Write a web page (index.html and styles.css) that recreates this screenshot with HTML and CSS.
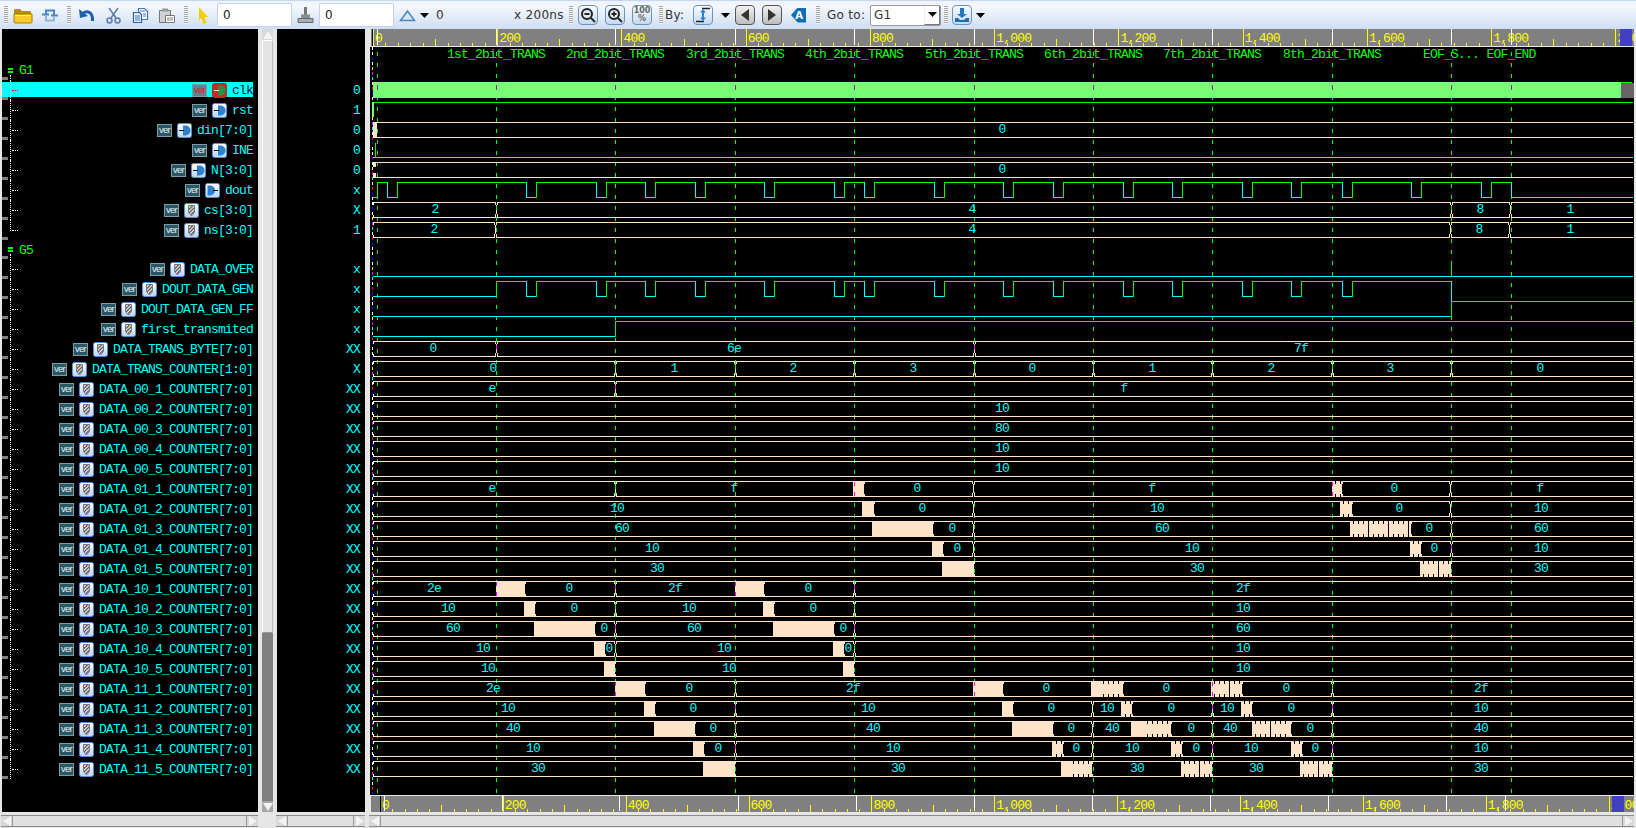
FILE: index.html
```html
<!DOCTYPE html>
<html lang="en">
<head>
<meta charset="utf-8">
<title>Waveform viewer</title>
<link rel="stylesheet" href="styles.css">
</head>
<body>
<svg class="defs" width="0" height="0" aria-hidden="true">
  <defs>
    <linearGradient id="iconbg" x1="0" y1="0" x2="0" y2="1"><stop offset="0" stop-color="#fff"/><stop offset="1" stop-color="#bcd3ee"/></linearGradient>
    <symbol id="port-in" viewBox="0 0 15 15"><rect x=".5" y=".5" width="14" height="14" rx="2" fill="url(#iconbg)" stroke="#4f8fd8"/><path d="M6 2.500h2.500a5 5 0 0 1 0 10H6z" fill="#2f7fcf"/><path d="M2 7.500h5" stroke="#111"/></symbol>
    <symbol id="port-out" viewBox="0 0 15 15"><rect x=".5" y=".5" width="14" height="14" rx="2" fill="url(#iconbg)" stroke="#4f8fd8"/><path d="M2.500 2.500h2.500a5 5 0 0 1 0 10H2.500z" fill="#2f7fcf"/><path d="M8 7.500h5" stroke="#111"/></symbol>
    <symbol id="port-sel" viewBox="0 0 15 15"><rect x=".5" y=".5" width="14" height="14" rx="2" fill="#c8281e" stroke="#a0332a"/><path d="M6 2.500h2.500a5 5 0 0 1 0 10H6z" fill="#2d8f45"/><path d="M2 7.500h5" stroke="#fff"/></symbol>
    <pattern id="hatch" width="2.500" height="2.500" patternUnits="userSpaceOnUse" patternTransform="rotate(45)"><rect width="2.500" height="2.500" fill="#f2f2f2"/><rect width="1.200" height="2.500" fill="#444"/></pattern>
    <symbol id="wire" viewBox="0 0 15 15"><rect x=".5" y=".5" width="14" height="14" rx="2" fill="url(#iconbg)" stroke="#4f8fd8"/><path d="M4.500 2.500h6v7l-3 3.500-3-3.500z" fill="url(#hatch)" stroke="#778"/></symbol>
  </defs>
</svg>

<header class="toolbar">
  <span class="grip"></span>
  <svg class="tool ml5" width="20" height="18" viewBox="0 0 20 18"><path d="M1 4a1 1 0 0 1 1-1h5l2 2h8a1 1 0 0 1 1 1v3H1z" fill="#b98d0c"/><path d="M1 8h18v8a1 1 0 0 1-1 1H2a1 1 0 0 1-1-1z" fill="#f8cb2a" stroke="#a87b00"/><path d="M2 9.500h16" stroke="#ffe98a"/></svg>
  <svg class="tool ml8" width="18" height="14" viewBox="0 0 18 14"><path d="M5 7V2.500h8V7" fill="none" stroke="#4a86c5" stroke-width="2"/><path d="M1 6.500h7M10 7.500h7" stroke="#4a86c5" stroke-width="2"/><path d="M5 8v4.500h8V8" fill="none" stroke="#8fb6de" stroke-width="2"/></svg>
  <span class="grip ml8"></span>
  <svg class="tool ml7" width="17" height="17" viewBox="0 0 17 17"><path d="M5 6.500C9 3 15 5 14.500 14" fill="none" stroke="#1f5fb0" stroke-width="3"/><path d="M1 2l1 9 8-2z" fill="#1f5fb0"/></svg>
  <svg class="tool ml11" width="15" height="17" viewBox="0 0 15 17"><g fill="none" stroke="#5b7ea8" stroke-width="1.500"><path d="M3 1l7 10M12 1L5 11"/><circle cx="3.500" cy="13.500" r="2.500"/><circle cx="11.500" cy="13.500" r="2.500"/></g></svg>
  <svg class="tool ml11" width="17" height="17" viewBox="0 0 17 17"><path d="M6.500 1.500h6l3 3v8h-9z" fill="#fff" stroke="#3f78ba" stroke-width="1.200"/><path d="M1.500 5.500h6l2 2v8h-8z" fill="#eaf2fb" stroke="#2c5f9c" stroke-width="1.200"/><path d="M3 9h5M3 11h5M3 13h5M8 4h5M11 7h3M11 9h3" stroke="#3f78ba"/></svg>
  <svg class="tool ml9" width="18" height="17" viewBox="0 0 18 17"><path d="M1.500 3.500h11v12h-11z" fill="#cfd3d8" stroke="#777"/><path d="M4 1.500h6v3H4z" fill="#999"/><path d="M7.500 8.500h9v7h-9z" fill="#fff" stroke="#777"/><path d="M9 11h6M9 13h6" stroke="#888"/></svg>
  <span class="grip ml8"></span>
  <svg class="tool ml10" width="11" height="17" viewBox="0 0 11 17"><path d="M1 0l9 10H6.500l2 6-3 1-2-6L1 13.500z" fill="#f5d000"/></svg>
  <input class="field ml8" value="0" aria-label="start">
  <svg class="tool ml5" width="17" height="18" viewBox="0 0 17 18"><path d="M7 1h3v8H7z" fill="#777"/><path d="M4 8.500h9v4H4z" fill="#8a8f96"/><path d="M1 12.500h15v4H1z" fill="#a9aeb5" stroke="#666"/></svg>
  <input class="field ml5" value="0" aria-label="end">
  <svg class="tool ml5" width="17" height="13" viewBox="0 0 17 13"><path d="M1.500 11.500L8.500 2l7 9.500z" fill="#d6e6f7" stroke="#4a86c5" stroke-width="1.500"/></svg>
  <svg class="caret ml4" width="9" height="5" viewBox="0 0 9 5"><path d="M0 0h9L4.500 5z"/></svg>
  <span class="label w7 ml7">0</span>
  <span class="label w44 ml71">x 200ns</span>
  <span class="grip ml11"></span>
  <button class="btn ml5" aria-label="zoom out"><svg width="16" height="16" viewBox="0 0 16 16"><circle cx="7" cy="7" r="5" fill="#dfe9f5" stroke="#222" stroke-width="2"/><path d="M4.500 7h5M11 11l4 4" stroke="#222" stroke-width="1.800"/></svg></button>
  <button class="btn ml7" aria-label="zoom in"><svg width="16" height="16" viewBox="0 0 16 16"><circle cx="7" cy="7" r="5" fill="#dfe9f5" stroke="#222" stroke-width="2"/><path d="M4.500 7h5M7 4.500v5M11 11l4 4" stroke="#222" stroke-width="1.800"/></svg></button>
  <button class="btn pct ml7">100<br>%</button>
  <span class="grip ml7"></span>
  <span class="label w18 ml2">By:</span>
  <button class="btn ml10" aria-label="by"><svg width="16" height="16" viewBox="0 0 16 16"><path d="M7 1.500h8M1 14.500h8" stroke="#222" stroke-width="1.500"/><path d="M8 3v10" stroke="#2f7fcf" stroke-width="2"/><path d="M5 5.500L8 2l3 3.500zM5 10.500L8 14l3-3.500z" fill="#2f7fcf"/></svg></button>
  <svg class="caret ml8" width="9" height="5" viewBox="0 0 9 5"><path d="M0 0h9L4.500 5z"/></svg>
  <button class="btn dark ml5" aria-label="previous"><svg width="10" height="12" viewBox="0 0 10 12"><path d="M9 0v12L1 6z" fill="#333"/></svg></button>
  <button class="btn dark ml7" aria-label="next"><svg width="10" height="12" viewBox="0 0 10 12"><path d="M1 0v12l8-6z" fill="#333"/></svg></button>
  <span class="tag ml9">A</span>
  <span class="grip ml10"></span>
  <span class="label w36 ml7">Go to:</span>
  <span class="select ml7"><span class="select-text">G1</span><span class="select-btn"><svg width="9" height="5" viewBox="0 0 9 5"><path d="M0 0h9L4.500 5z"/></svg></span></span>
  <span class="grip ml3"></span>
  <button class="btn ml4" aria-label="export"><svg width="16" height="16" viewBox="0 0 16 16"><path d="M6 1h4v6h3l-5 4-5-4h3z" fill="#2277c2"/><path d="M1 11h3l2 2h4l2-2h3v4H1z" fill="#1f6bae"/></svg></button>
  <svg class="caret ml4" width="9" height="5" viewBox="0 0 9 5"><path d="M0 0h9L4.500 5z"/></svg>
</header>

<main class="panes">
  <section class="names">
    <div class="group"><span class="bars"></span><span class="gname">G1</span></div>
    <div class="row selected"><span class="tree"></span><span class="ver">ver</span><svg class="ico"><use href="#port-sel"/></svg><span class="name">clk</span></div>
    <div class="row"><span class="tree"></span><span class="ver">ver</span><svg class="ico"><use href="#port-in"/></svg><span class="name">rst</span></div>
    <div class="row"><span class="tree"></span><span class="ver">ver</span><svg class="ico"><use href="#port-in"/></svg><span class="name">din[7:0]</span></div>
    <div class="row"><span class="tree"></span><span class="ver">ver</span><svg class="ico"><use href="#port-in"/></svg><span class="name">INE</span></div>
    <div class="row"><span class="tree"></span><span class="ver">ver</span><svg class="ico"><use href="#port-in"/></svg><span class="name">N[3:0]</span></div>
    <div class="row"><span class="tree"></span><span class="ver">ver</span><svg class="ico"><use href="#port-out"/></svg><span class="name">dout</span></div>
    <div class="row"><span class="tree"></span><span class="ver">ver</span><svg class="ico"><use href="#wire"/></svg><span class="name">cs[3:0]</span></div>
    <div class="row last"><span class="tree"></span><span class="ver">ver</span><svg class="ico"><use href="#wire"/></svg><span class="name">ns[3:0]</span></div>
    <div class="group short"><span class="bars"></span><span class="gname">G5</span></div>
    <div class="row"><span class="tree"></span><span class="ver">ver</span><svg class="ico"><use href="#wire"/></svg><span class="name">DATA_OVER</span></div>
    <div class="row"><span class="tree"></span><span class="ver">ver</span><svg class="ico"><use href="#wire"/></svg><span class="name">DOUT_DATA_GEN</span></div>
    <div class="row"><span class="tree"></span><span class="ver">ver</span><svg class="ico"><use href="#wire"/></svg><span class="name">DOUT_DATA_GEN_FF</span></div>
    <div class="row"><span class="tree"></span><span class="ver">ver</span><svg class="ico"><use href="#wire"/></svg><span class="name">first_transmited</span></div>
    <div class="row"><span class="tree"></span><span class="ver">ver</span><svg class="ico"><use href="#wire"/></svg><span class="name">DATA_TRANS_BYTE[7:0]</span></div>
    <div class="row"><span class="tree"></span><span class="ver">ver</span><svg class="ico"><use href="#wire"/></svg><span class="name">DATA_TRANS_COUNTER[1:0]</span></div>
    <div class="row"><span class="tree"></span><span class="ver">ver</span><svg class="ico"><use href="#wire"/></svg><span class="name">DATA_00_1_COUNTER[7:0]</span></div>
    <div class="row"><span class="tree"></span><span class="ver">ver</span><svg class="ico"><use href="#wire"/></svg><span class="name">DATA_00_2_COUNTER[7:0]</span></div>
    <div class="row"><span class="tree"></span><span class="ver">ver</span><svg class="ico"><use href="#wire"/></svg><span class="name">DATA_00_3_COUNTER[7:0]</span></div>
    <div class="row"><span class="tree"></span><span class="ver">ver</span><svg class="ico"><use href="#wire"/></svg><span class="name">DATA_00_4_COUNTER[7:0]</span></div>
    <div class="row"><span class="tree"></span><span class="ver">ver</span><svg class="ico"><use href="#wire"/></svg><span class="name">DATA_00_5_COUNTER[7:0]</span></div>
    <div class="row"><span class="tree"></span><span class="ver">ver</span><svg class="ico"><use href="#wire"/></svg><span class="name">DATA_01_1_COUNTER[7:0]</span></div>
    <div class="row"><span class="tree"></span><span class="ver">ver</span><svg class="ico"><use href="#wire"/></svg><span class="name">DATA_01_2_COUNTER[7:0]</span></div>
    <div class="row"><span class="tree"></span><span class="ver">ver</span><svg class="ico"><use href="#wire"/></svg><span class="name">DATA_01_3_COUNTER[7:0]</span></div>
    <div class="row"><span class="tree"></span><span class="ver">ver</span><svg class="ico"><use href="#wire"/></svg><span class="name">DATA_01_4_COUNTER[7:0]</span></div>
    <div class="row"><span class="tree"></span><span class="ver">ver</span><svg class="ico"><use href="#wire"/></svg><span class="name">DATA_01_5_COUNTER[7:0]</span></div>
    <div class="row"><span class="tree"></span><span class="ver">ver</span><svg class="ico"><use href="#wire"/></svg><span class="name">DATA_10_1_COUNTER[7:0]</span></div>
    <div class="row"><span class="tree"></span><span class="ver">ver</span><svg class="ico"><use href="#wire"/></svg><span class="name">DATA_10_2_COUNTER[7:0]</span></div>
    <div class="row"><span class="tree"></span><span class="ver">ver</span><svg class="ico"><use href="#wire"/></svg><span class="name">DATA_10_3_COUNTER[7:0]</span></div>
    <div class="row"><span class="tree"></span><span class="ver">ver</span><svg class="ico"><use href="#wire"/></svg><span class="name">DATA_10_4_COUNTER[7:0]</span></div>
    <div class="row"><span class="tree"></span><span class="ver">ver</span><svg class="ico"><use href="#wire"/></svg><span class="name">DATA_10_5_COUNTER[7:0]</span></div>
    <div class="row"><span class="tree"></span><span class="ver">ver</span><svg class="ico"><use href="#wire"/></svg><span class="name">DATA_11_1_COUNTER[7:0]</span></div>
    <div class="row"><span class="tree"></span><span class="ver">ver</span><svg class="ico"><use href="#wire"/></svg><span class="name">DATA_11_2_COUNTER[7:0]</span></div>
    <div class="row"><span class="tree"></span><span class="ver">ver</span><svg class="ico"><use href="#wire"/></svg><span class="name">DATA_11_3_COUNTER[7:0]</span></div>
    <div class="row"><span class="tree"></span><span class="ver">ver</span><svg class="ico"><use href="#wire"/></svg><span class="name">DATA_11_4_COUNTER[7:0]</span></div>
    <div class="row"><span class="tree"></span><span class="ver">ver</span><svg class="ico"><use href="#wire"/></svg><span class="name">DATA_11_5_COUNTER[7:0]</span></div>
  </section>

  <aside class="vscroll">
    <span class="varrow up"></span>
    <span class="vthumb"></span>
    <span class="vtrack"></span>
    <span class="varrow down"></span>
  </aside>

  <section class="values">
    <div class="vspace"></div>
    <div class="val">0</div><div class="val">1</div><div class="val">0</div><div class="val">0</div><div class="val">0</div><div class="val">x</div><div class="val">X</div><div class="val">1</div>
    <div class="vspace short"></div>
    <div class="val">x</div><div class="val">x</div><div class="val">x</div><div class="val">x</div><div class="val">XX</div><div class="val">X</div>
    <div class="val">XX</div><div class="val">XX</div><div class="val">XX</div><div class="val">XX</div><div class="val">XX</div>
    <div class="val">XX</div><div class="val">XX</div><div class="val">XX</div><div class="val">XX</div><div class="val">XX</div>
    <div class="val">XX</div><div class="val">XX</div><div class="val">XX</div><div class="val">XX</div><div class="val">XX</div>
    <div class="val">XX</div><div class="val">XX</div><div class="val">XX</div><div class="val">XX</div><div class="val">XX</div>
  </section>

  <section class="wavecol">
    <svg id="ruler-top" class="ruler" width="1264" height="18" viewBox="370 29 1264 18"></svg>
    <svg id="wave" class="wave" width="1264" height="748" viewBox="370 47 1264 748"></svg>
    <svg id="ruler-bottom" class="ruler rb" width="1264" height="16" viewBox="370 796 1264 16"></svg>
  </section>
</main>

<footer class="hbars">
  <div class="hscroll hs-names"><span class="harrow left"></span><span class="hthumb"></span><span class="harrow right"></span></div>
  <div class="hscroll hs-values"><span class="harrow left"></span><span class="hthumb"></span><span class="harrow right"></span></div>
  <div class="hscroll hs-wave"><span class="harrow left"></span><span class="hthumb"></span><span class="harrow right"></span></div>
</footer>
<script src="wave.js"></script>
</body>
</html>
```
FILE: styles.css
```css
* { box-sizing: border-box; }
html, body { margin: 0; padding: 0; }
body {
  width: 1636px; height: 828px; overflow: hidden;
  background: #e6e6e6;
  display: flex; flex-direction: column;
  font-family: "DejaVu Sans", sans-serif;
}
.defs { position: absolute; }

/* toolbar */
.toolbar {
  height: 29px; flex: none; display: flex; align-items: center; padding-left: 4px;
  background: linear-gradient(#eef3fb, #f4f7fc 20%, #cfdef3);
  border-top: 1px solid #c6d8f0;
}
.grip { width: 4px; height: 18px; flex: none; background: repeating-linear-gradient(#a8a8a8 0 1px, #f2f2f2 1px 2px); }
.tool, .caret { flex: none; display: block; }
.field { width: 75px; height: 24px; flex: none; border: 1px solid #c4d3e8; border-radius: 2px; background: #fff; padding: 0 0 0 5px; font: 12px "DejaVu Sans", sans-serif; color: #222; }
.label { flex: none; font-size: 12px; color: #333; white-space: nowrap; letter-spacing: .3px; }
.w7 { width: 7px; } .w18 { width: 18px; } .w36 { width: 36px; } .w44 { width: 44px; }
.btn { width: 20px; height: 20px; flex: none; padding: 0; display: flex; align-items: center; justify-content: center; border: 1px solid #6a94bf; border-radius: 4px; background: linear-gradient(#f8fbff, #c6d9ef); }
.btn.dark { border-color: #555; background: linear-gradient(#f2f2f2, #bdbdbd); }
.pct { flex-direction: column; font: bold 8px/8px "DejaVu Sans", sans-serif; color: #666; display: block; }
.tag { width: 15px; height: 15px; flex: none; display: block; text-align: right; padding-right: 3px; font: bold 10px/15px "DejaVu Sans", sans-serif; color: #fff; background: #0d6fb3; clip-path: polygon(0 50%, 45% 0, 100% 0, 100% 100%, 45% 100%); }
.select { width: 71px; height: 21px; flex: none; display: flex; align-items: stretch; border: 1px solid #9a9a9a; border-radius: 2px; background: #fff; font-size: 12px; color: #333; }
.select-text { flex: 1; padding-left: 3px; line-height: 19px; letter-spacing: .3px; }
.select-btn { width: 16px; display: flex; align-items: center; justify-content: center; border-left: 1px solid #eee; border-right: 1px solid #777; border-bottom: 1px solid #777; }
.select-btn svg { display: block; }
.ml2 { margin-left: 2px; } .ml3 { margin-left: 3px; } .ml4 { margin-left: 4px; } .ml5 { margin-left: 5px; }
.ml7 { margin-left: 7px; } .ml8 { margin-left: 8px; } .ml9 { margin-left: 9px; } .ml10 { margin-left: 10px; }
.ml11 { margin-left: 11px; } .ml71 { margin-left: 71px; }

/* panes */
.panes { height: 783px; flex: none; display: flex; }
.names, .values, .val, .gname, .name {
  font-family: "Liberation Mono", monospace; font-size: 13px; letter-spacing: -.8px;
}
.names { width: 256px; margin-left: 2px; flex: none; background: #000; padding: 31px 5px 0 0; overflow: hidden; }
.group { height: 20px; display: flex; align-items: center; position: relative; }
.group.short { height: 19px; }
.group::before { content: ""; width: 6px; height: 3px; background: #808080; position: absolute; left: 0; bottom: 0; }
.bars { width: 5px; height: 5px; margin-left: 6px; border-top: 2px solid #0f0; border-bottom: 2px solid #0f0; flex: none; position: relative; }
.bars::after { content: ""; position: absolute; left: 2px; top: 5px; height: 6px; border-left: 1px dotted #fff; }
.gname { color: #0f0; margin-left: 6px; padding-top: 1px; }
.row { height: 20px; display: flex; align-items: center; position: relative; }
.row::before { content: ""; width: 6px; height: 3px; background: #808080; align-self: flex-start; margin-top: 17px; flex: none; }
.tree { width: 8px; height: 20px; margin-left: 2px; flex: none; margin-right: auto; border-left: 1px dotted #fff; display: flex; align-items: center; }
.tree::after { content: ""; width: 6px; margin-left: 1px; border-top: 1px dotted #fff; }
.last .tree { height: 11px; align-self: flex-start; align-items: flex-end; }
.ver { width: 15px; height: 13px; flex: none; background: #2a5766; border: 1px solid #7d9ba5; color: #e4eef0; text-align: center; font: 9.5px/10.500px "Liberation Sans", sans-serif; }
.ico { width: 15px; height: 15px; flex: none; margin-left: 5px; display: block; }
.name { color: #0ff; margin-left: 5px; white-space: nowrap; line-height: 20px; padding-top: 2px; }
.selected { background: linear-gradient(#0ff, #0ff) 0 2px / 100% 15px no-repeat; }
.selected .name { color: #123; }
.selected .ver { background: #56888f; color: #d22; }
.selected .tree::after { border-top-color: #f00; }

.vscroll { width: 19px; flex: none; display: flex; flex-direction: column; padding: 0 4px 0 4px; }
.varrow { height: 11px; flex: none; display: flex; justify-content: center; align-items: center; background: #d8d8d8; }
.varrow::before { content: ""; border-left: 5px solid transparent; border-right: 5px solid transparent; }
.up::before { border-bottom: 8px solid #f4f4f4; }
.down::before { border-top: 8px solid #f4f4f4; }
.down { background: #a8a8a8; }
.vthumb { height: 593px; flex: none; background: #e4e4e4; border: 1px solid #fff; border-bottom-color: #999; border-right-color: #bbb; }
.vtrack { flex: 1; background: #808080; }

.values { width: 88px; flex: none; background: #000; padding: 31px 0 0 0; overflow: hidden; }
.vspace { height: 20px; }
.vspace.short { height: 19px; }
.val { height: 20px; line-height: 22px; text-align: right; padding-right: 5px; color: #0ff; }

.wavecol { width: 1264px; margin-left: 5px; flex: none; display: flex; flex-direction: column; }
.ruler { display: block; flex: none; }
.wave { display: block; flex: none; background: #000; }
.rb { margin-top: 1px; }
.rtext, .mtext, .btext { font-family: "Liberation Mono", monospace; font-size: 13px; letter-spacing: -.8px; }
.rtext { fill: #ff0; }
.mtext { fill: #0f0; text-anchor: middle; }
.btext { fill: #0ff; text-anchor: middle; }

/* bottom scrollbars */
.hbars { margin-top: 3px; height: 12px; flex: none; display: flex; }
.hscroll { display: flex; height: 12px; flex: none; border-top: 1px solid #8a8a8a; border-bottom: 1px solid #8a8a8a; }
.hs-names { width: 257px; margin-left: 1px; }
.hs-values { width: 89px; margin-left: 18px; }
.hs-wave { width: 1265px; margin-left: 4px; }
.hthumb { flex: 1; background: #e0e0e0; border-left: 1px solid #999; border-right: 1px solid #999; }
.harrow { width: 11px; flex: none; display: flex; align-items: center; justify-content: center; background: #d8d8d8; }
.harrow::before { content: ""; border-top: 5px solid transparent; border-bottom: 5px solid transparent; }
.left::before { border-right: 8px solid #f4f4f4; }
.right::before { border-left: 8px solid #f4f4f4; }
```
FILE: wave.js
```js
const NS = 'http://www.w3.org/2000/svg';
const BUS = '#ffe4ca', GREEN = '#00ff00', CYAN = '#00ffff';
const MARKS = [377, 496, 615, 735, 854, 974, 1093, 1212, 1332, 1451, 1511];
const MARK_NAMES = {496: '1st_2bit_TRANS', 615: '2nd_2bit_TRANS', 735: '3rd_2bit_TRANS', 854: '4th_2bit_TRANS',
  974: '5th_2bit_TRANS', 1093: '6th_2bit_TRANS', 1212: '7th_2bit_TRANS', 1332: '8th_2bit_TRANS', 1451: 'EOF_S...', 1511: 'EOF_END'};
const X_END = 1632;

function rect(svg, x, y, w, h, fill) {
  const r = document.createElementNS(NS, 'rect');
  r.setAttribute('x', Math.round(x)); r.setAttribute('y', Math.round(y));
  r.setAttribute('width', Math.round(w)); r.setAttribute('height', Math.round(h));
  r.setAttribute('fill', fill); r.setAttribute('shape-rendering', 'crispEdges');
  svg.appendChild(r);
}
function text(svg, x, y, s, cls) {
  const t = document.createElementNS(NS, 'text');
  t.setAttribute('x', x); t.setAttribute('y', y); t.setAttribute('class', cls);
  t.textContent = s; svg.appendChild(t);
}

/* ---------- rulers ---------- */
function ruler(svg, top, bottom, x0, scale, blockX, black) {
  rect(svg, 371, top, 1263, bottom - top, '#808080');
  for (let v = 0; v <= 2020; v += 20) {
    const x = x0 + v * scale;
    if (x > 1634) break;
    if (v % 200 === 0) rect(svg, x, top, 1, bottom - top, '#ffff00');
    else if (v % 100 === 0) rect(svg, x, bottom - 7, 1, 7, '#ffff00');
    else rect(svg, x, bottom - 3, 1, 3, '#ffff00');
  }
  for (let v = 0; v <= 2000; v += 200) {
    const s = v >= 1000 ? Math.floor(v / 1000) + ',' + String(v % 1000).padStart(3, '0') : String(v);
    text(svg, x0 + v * scale + 2, top + 13, s, 'rtext');
  }
  rect(svg, black, top, 1, bottom - top, '#000');
  MARKS.forEach(m => {
    const t = (m - 373) / 0.6212;
    rect(svg, x0 + t * scale, top, 1, bottom - top - 1, '#fff');
  });
  rect(svg, blockX, top, 12, bottom - top, '#4040c0');
}
const rt = document.getElementById('ruler-top');
ruler(rt, 29, 46, 373, 0.6212, 1620, 372);
rect(rt, 371, 46, 1263, 1, '#e8e8e8');
ruler(document.getElementById('ruler-bottom'), 796, 812, 380, 0.6143, 1612, 380);

/* ---------- wave canvas ---------- */
const W = document.getElementById('wave');
const rowTop = k => 82 + 20 * k - (k > 8 ? 1 : 0);

// marker dashes and names
MARKS.forEach(m => {
  for (let y = 52; y < 795; y += 11) rect(W, m, y, 1, 4, GREEN);
  if (MARK_NAMES[m]) text(W, m, 58, MARK_NAMES[m], 'mtext');
});

// noisy column at time zero
const NOISE = ['#fff', '#fff', '#00f', '#fff', '#ff0', '#f0f', '#0ff', '#fff', '#f00', '#00f'];
for (let y = 47, i = 0; y < 795; y += 5, i++) rect(W, 372, y, 1, 3, NOISE[i % NOISE.length]);

// clk band
rect(W, 373, 82, 1248, 16, '#76ff76');
rect(W, 1621, 83, 13, 15, '#666');
rect(W, 1621, 82, 11, 1, GREEN);
MARKS.forEach(m => rect(W, m, 85, 1, 5, '#8a2a8a'));

// single-bit rows: edges toggle the level, low is cyan, high is green
function bit(k, startHigh, edges, xEnd) {
  const top = rowTop(k), low = top + 15;
  let level = startHigh, x = 373;
  const draw = to => rect(W, x, level ? top : low, to - x + 1, 1, level ? GREEN : CYAN);
  edges.forEach(e => {
    draw(e);
    level = !level;
    rect(W, e, top, 1, 16, level ? GREEN : CYAN);
    x = e;
  });
  draw(xEnd || X_END);
}
const PULSES = [526, 596, 645, 695, 764, 834, 864, 934, 1003, 1053, 1123, 1172, 1242, 1291, 1342, 1411, 1481];
const pulseEdges = PULSES.flatMap(p => [p, p + 10]);

bit(1, true, []);
rect(W, 372, 102, 2, 15, '#76ff76');
bit(3, false, []);
rect(W, 375, 143, 1, 14, GREEN);
bit(5, false, [377, 387, 397].concat(pulseEdges, [1511]));
bit(9, false, []);
rect(W, 1451, 262, 1, 15, GREEN);
bit(10, false, [496].concat(pulseEdges.slice(0, -4)), 1451);
rect(W, 1451, 281, 1, 20, CYAN);
bit(11, false, [1451]);
bit(12, false, [615]);

// bus rows: events are a transition x, [x1, x2] a solid fill,
// [x1, x2, 1] a densely jagged fill and [x1, x2, 2] a fill jagged only towards its end
function bus(k, events, labels) {
  const top = rowTop(k), bot = top + 15;
  let cur = 374;
  const notch = x => {
    rect(W, x - 1, top, 1, 3, BUS); rect(W, x + 1, top, 1, 3, BUS);
    rect(W, x, top + 3, 1, 9, BUS);
    rect(W, x - 1, top + 12, 1, 4, BUS); rect(W, x + 1, top + 12, 1, 4, BUS);
    if (MARKS.includes(x)) rect(W, x, top + 4, 1, 4, k % 2 ? '#f0f' : GREEN);
  };
  const lines = to => { if (to > cur) { rect(W, cur, top, to - cur, 1, BUS); rect(W, cur, bot, to - cur, 1, BUS); } };
  rect(W, 373, top, 1, 3, '#fff'); rect(W, 373, top + 13, 1, 3, '#fff');
  events.concat([X_END + 1]).forEach((e, i, all) => {
    if (i === all.length - 1) { lines(e); return; }
    if (Array.isArray(e)) {
      const x1 = e[0], x2 = e[1];
      lines(x1);
      rect(W, x1, top, x2 - x1, 16, BUS);
      if (e[2] === 1) {
        let n = 0;
        for (let x = x1 + 3; x < x2 - 1; x += 5) {
          n++;
          rect(W, x, top, 1, 3, '#000'); rect(W, x, top + 13, 1, 3, '#000');
          if (n % 4 === 0) rect(W, x, top + 3, 1, 10, '#000');
        }
      } else if (e[2] === 2) {
        for (let x = x1 + Math.floor((x2 - x1) * 0.4); x < x2 - 1; x += 5) {
          rect(W, x, top, 1, 3, '#000'); rect(W, x, top + 13, 1, 3, '#000');
        }
      }
      MARKS.forEach(m => {
        if (Math.abs(m - x1) < 2) { rect(W, m, top + 1, 1, 4, '#f0f'); rect(W, m, top + 11, 1, 4, '#f0f'); }
      });
      rect(W, x2, top, 1, 3, BUS); rect(W, x2, top + 13, 1, 3, BUS);
      cur = x2 + 1;
    } else {
      lines(e - 1);
      notch(e);
      cur = e + 2;
    }
  });
  labels.forEach(l => text(W, l[0], top + 11, l[1], 'btext'));
}
rect(W, 373, 122, 4, 16, BUS);
rect(W, 373, 162, 3, 5, BUS);
rect(W, 373, 173, 3, 5, BUS);

bus(2, [], [[1002, '0']]);
bus(4, [], [[1002, '0']]);
bus(6, [496, 1451, 1510], [[435, '2'], [972, '4'], [1480, '8'], [1570, '1']]);
bus(7, [495, 1450, 1509], [[434, '2'], [972, '4'], [1479, '8'], [1570, '1']]);
bus(13, [496, 974], [[433, '0'], [734, '6e'], [1301, '7f']]);
bus(14, [615, 735, 854, 974, 1093, 1212, 1332, 1451],
  [[493, '0'], [674, '1'], [793, '2'], [913, '3'], [1032, '0'], [1152, '1'], [1271, '2'], [1390, '3'], [1540, '0']]);
bus(15, [615], [[492, 'e'], [1124, 'f']]);
bus(16, [], [[1002, '10']]);
bus(17, [], [[1002, '80']]);
bus(18, [], [[1002, '10']]);
bus(19, [], [[1002, '10']]);
bus(20, [615, [853, 864], 973, [1332, 1342, 1], 1450],
  [[492, 'e'], [734, 'f'], [917, '0'], [1152, 'f'], [1394, '0'], [1540, 'f']]);
bus(21, [[862, 874], 973, [1340, 1352, 1], 1450],
  [[617, '10'], [922, '0'], [1157, '10'], [1399, '0'], [1541, '10']]);
bus(22, [[872, 933], 973, [1350, 1411, 1], 1451],
  [[622, '60'], [952, '0'], [1162, '60'], [1429, '0'], [1541, '60']]);
bus(23, [[932, 943], 973, [1410, 1421, 1], 1451],
  [[652, '10'], [957, '0'], [1192, '10'], [1434, '0'], [1541, '10']]);
bus(24, [[942, 974], [1420, 1451, 1]],
  [[657, '30'], [1197, '30'], [1541, '30']]);
bus(25, [[496, 525], 615, [735, 764], 854],
  [[434, '2e'], [569, '0'], [675, '2f'], [808, '0'], [1243, '2f']]);
bus(26, [[524, 535], 615, [763, 774], 854],
  [[448, '10'], [574, '0'], [689, '10'], [813, '0'], [1243, '10']]);
bus(27, [[534, 595], 615, [773, 834], 854],
  [[453, '60'], [604, '0'], [694, '60'], [843, '0'], [1243, '60']]);
bus(28, [[594, 605], 615, [833, 844], 854],
  [[483, '10'], [609, '0'], [724, '10'], [848, '0'], [1243, '10']]);
bus(29, [[604, 615], [843, 854]],
  [[488, '10'], [729, '10'], [1243, '10']]);
bus(30, [[615, 645], 735, [973, 1003], [1091, 1123, 2], [1211, 1242, 1], 1332],
  [[493, '2e'], [689, '0'], [853, '2f'], [1046, '0'], [1166, '0'], [1286, '0'], [1481, '2f']]);
bus(31, [[644, 655], 735, [1002, 1013], 1092, [1121, 1132, 2], 1212, [1241, 1252, 1], 1332],
  [[508, '10'], [693, '0'], [868, '10'], [1051, '0'], [1107, '10'], [1171, '0'], [1227, '10'], [1291, '0'], [1481, '10']]);
bus(32, [[654, 695], 735, [1012, 1053], 1092, [1131, 1171, 2], 1212, [1252, 1291, 1], 1332],
  [[513, '40'], [713, '0'], [873, '40'], [1071, '0'], [1112, '40'], [1191, '0'], [1230, '40'], [1310, '0'], [1481, '40']]);
bus(33, [[693, 704], 735, [1052, 1063, 2], 1092, [1171, 1182, 2], 1212, [1291, 1302, 1], 1332],
  [[533, '10'], [718, '0'], [893, '10'], [1076, '0'], [1132, '10'], [1196, '0'], [1251, '10'], [1315, '0'], [1481, '10']]);
bus(34, [[703, 735], [1061, 1092, 2], [1181, 1212, 1], [1300, 1332, 1]],
  [[538, '30'], [898, '30'], [1137, '30'], [1256, '30'], [1481, '30']]);
```
